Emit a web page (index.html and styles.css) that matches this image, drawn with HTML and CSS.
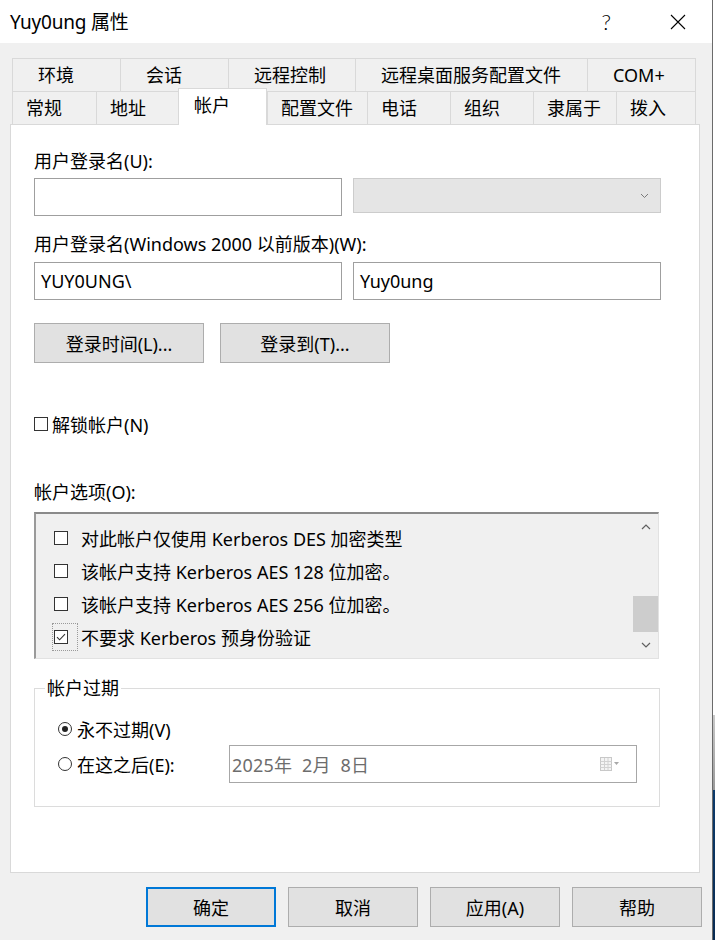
FILE: index.html
```html
<!DOCTYPE html>
<html lang="zh-CN">
<head>
<meta charset="utf-8">
<title>Yuy0ung 属性</title>
<link rel="stylesheet" href="styles.css">
</head>
<body>
<div class="screen">
  <div class="dialog">
    <div class="titlebar">
      <span class="title">Yuy0ung 属性</span>
      <span class="help">?</span>
      <svg class="close" width="16" height="16" viewBox="0 0 16 16"><path d="M1 1L15 15M15 1L1 15" stroke="#000" stroke-width="1.1" fill="none"/></svg>
    </div>

    <div class="tabs">
      <div class="tabrow row1">
        <div class="tab">环境</div>
        <div class="tab">会话</div>
        <div class="tab">远程控制</div>
        <div class="tab">远程桌面服务配置文件</div>
        <div class="tab">COM+</div>
      </div>
      <div class="tabrow row2">
        <div class="tab">常规</div>
        <div class="tab">地址</div>
        <div class="tab active">帐户</div>
        <div class="tab">配置文件</div>
        <div class="tab">电话</div>
        <div class="tab">组织</div>
        <div class="tab">隶属于</div>
        <div class="tab">拨入</div>
      </div>
    </div>

    <div class="panel">
      <div class="lbl first">用户登录名(U):</div>
      <div class="fieldrow">
        <div class="input"></div>
        <div class="combo">
          <svg width="9" height="6" viewBox="0 0 9 6"><path d="M1 1L4.5 4.5L8 1" stroke="#7a7a7a" stroke-width="1" fill="none"/></svg>
        </div>
      </div>
      <div class="lbl second">用户登录名(Windows 2000 以前版本)(W):</div>
      <div class="fieldrow tight">
        <div class="input">YUY0UNG\</div>
        <div class="input">Yuy0ung</div>
      </div>
      <div class="btnrow">
        <div class="btn wide">登录时间(L)...</div>
        <div class="btn wide">登录到(T)...</div>
      </div>
      <div class="unlock">
        <span class="cb"></span><span>解锁帐户(N)</span>
      </div>
      <div class="lbl opts">帐户选项(O):</div>
      <div class="listbox">
        <div class="items">
          <div class="item"><span class="cbw"><span class="cb"></span></span><span>对此帐户仅使用 Kerberos DES 加密类型</span></div>
          <div class="item"><span class="cbw"><span class="cb"></span></span><span>该帐户支持 Kerberos AES 128 位加密。</span></div>
          <div class="item"><span class="cbw"><span class="cb"></span></span><span>该帐户支持 Kerberos AES 256 位加密。</span></div>
          <div class="item"><span class="cbw focus"><span class="cb checked"><svg width="12" height="12" viewBox="0 0 12 12"><path d="M2 6.2L4.6 8.8L10 3.2" stroke="#333" stroke-width="1.1" fill="none"/></svg></span></span><span>不要求 Kerberos 预身份验证</span></div>
        </div>
        <div class="scroll">
          <div class="arrow"><svg width="10" height="6" viewBox="0 0 10 6"><path d="M1 5L5 1L9 5" stroke="#606060" stroke-width="1.2" fill="none"/></svg></div>
          <div class="track"><div class="thumb"></div></div>
          <div class="arrow"><svg width="10" height="6" viewBox="0 0 10 6"><path d="M1 1L5 5L9 1" stroke="#606060" stroke-width="1.2" fill="none"/></svg></div>
        </div>
      </div>
      <fieldset class="group">
        <legend>帐户过期</legend>
        <div class="radiorow"><span class="radio on"></span><span>永不过期(V)</span></div>
        <div class="radiorow second">
          <span class="radio"></span><span>在这之后(E):</span>
          <div class="date">
            <span class="datetext">2025年&nbsp; 2月&nbsp; 8日</span>
            <svg class="cal" width="22" height="14" viewBox="0 0 22 14"><rect x="0.5" y="0.5" width="11" height="13" fill="#f4f4f4" stroke="#c8c8c8"/><path d="M0.5 4.5H11.5M0.5 7.5H11.5M0.5 10.5H11.5M4.5 1V13M8 1V13" stroke="#d2d2d2" stroke-width="1"/><path d="M14 5H19L16.5 8Z" fill="#a8a8a8"/></svg>
          </div>
        </div>
      </fieldset>
    </div>

    <div class="footer">
      <div class="btn foot default">确定</div>
      <div class="btn foot">取消</div>
      <div class="btn foot">应用(A)</div>
      <div class="btn foot">帮助</div>
    </div>
  </div>
  <div class="outside"></div>
</div>
</body>
</html>
```

FILE: styles.css
```css
html, body {
  margin: 0;
  padding: 0;
}
body {
  width: 715px;
  height: 940px;
  overflow: hidden;
  background: #ffffff;
  font-family: "Noto Sans", "Noto Sans CJK SC", sans-serif;
  font-size: 18px;
  color: #000;
}
.screen {
  display: flex;
  height: 940px;
}
.dialog {
  width: 712px;
  height: 940px;
  background: #f0f0f0;
  border-right: 1px solid #6b6b6b;
  display: flex;
  flex-direction: column;
}
.outside {
  flex: 1;
  background: linear-gradient(to bottom, #ffffff 0, #ffffff 715px, #c9c9c9 715px, #9a9a9a 790px, #0c3a6b 790px, #082b52 940px);
}

/* title bar */
.titlebar {
  height: 43px;
  flex: none;
  background: #ffffff;
  display: flex;
  align-items: center;
  padding-left: 10px;
}
.title {
  font-size: 19px;
  line-height: 24px;
  letter-spacing: -0.2px;
}
.help {
  margin-left: auto;
  margin-right: 59px;
  font-family: "Lato", "DejaVu Sans", sans-serif;
  font-weight: 300;
  font-size: 22px;
  line-height: 22px;
}
.close {
  margin-right: 26px;
}

/* tabs */
.tabs {
  margin-top: 15px;
  padding-left: 12px;
  flex: none;
}
.tabrow {
  display: grid;
  height: 33px;
}
.row1 {
  grid-template-columns: 108px 108px 127px 232px 109px;
}
.row2 {
  grid-template-columns: 84px 82px 89px 100px 83px 83px 83px 80px;
}
.tab {
  box-sizing: border-box;
  border-top: 1px solid #d9d9d9;
  border-left: 1px solid #d9d9d9;
  display: flex;
  align-items: center;
  font-size: 18px;
  line-height: 22px;
  white-space: nowrap;
}
.row1 .tab {
  padding-left: 25px;
}
.row2 .tab {
  padding-left: 13px;
}
.tab:last-child {
  border-right: 1px solid #d9d9d9;
}
.tab.active {
  background: #ffffff;
  margin-top: -3px;
  margin-bottom: -1px;
  position: relative;
  z-index: 1;
  border-right: 1px solid #d9d9d9;
  padding-left: 15px;
  padding-bottom: 4px;
}

/* panel */
.panel {
  flex: none;
  margin-left: 10px;
  width: 690px;
  height: 749px;
  box-sizing: border-box;
  border: 1px solid #d9d9d9;
  background: #ffffff;
  padding-left: 23px;
  display: flex;
  flex-direction: column;
}
.lbl {
  height: 22px;
  line-height: 22px;
  white-space: nowrap;
}
.lbl.first {
  margin-top: 25px;
}
.lbl.second {
  margin-top: 17px;
}
.lbl.opts {
  margin-top: 46px;
}
.fieldrow {
  display: flex;
  gap: 11px;
  margin-top: 6px;
  align-items: flex-start;
}
.fieldrow.tight {
  margin-top: 7px;
}
.input {
  width: 308px;
  height: 38px;
  box-sizing: border-box;
  border: 1px solid #9f9f9f;
  background: #ffffff;
  padding-left: 6px;
  line-height: 36px;
}
.combo {
  width: 308px;
  height: 35px;
  box-sizing: border-box;
  border: 1px solid #cccccc;
  background: #e5e5e5;
  display: flex;
  align-items: center;
  justify-content: flex-end;
  padding-right: 11px;
}
.btnrow {
  display: flex;
  gap: 16px;
  margin-top: 23px;
}
.btn {
  box-sizing: border-box;
  height: 40px;
  border: 1px solid #adadad;
  background: #e1e1e1;
  display: flex;
  align-items: center;
  justify-content: center;
  white-space: nowrap;
}
.btn.wide {
  width: 170px;
}
.unlock {
  margin-top: 50px;
  height: 22px;
  display: flex;
  align-items: center;
  gap: 4px;
}
.cb {
  width: 14px;
  height: 14px;
  box-sizing: border-box;
  border: 1px solid #333333;
  background: #ffffff;
  display: inline-flex;
  align-items: center;
  justify-content: center;
  flex: none;
}

/* list box */
.listbox {
  margin-top: 9px;
  width: 625px;
  height: 147px;
  box-sizing: border-box;
  border-top: 2px solid #8a8a8a;
  border-left: 2px solid #9a9a9a;
  border-right: 1px solid #e2e2e2;
  border-bottom: 1px solid #e2e2e2;
  background: #f0f0f0;
  display: flex;
}
.items {
  flex: 1;
  padding-top: 7px;
  padding-left: 16px;
}
.item {
  height: 33px;
  display: flex;
  align-items: center;
  white-space: nowrap;
}
.cbw {
  width: 26px;
  height: 28px;
  box-sizing: border-box;
  border: 1px dotted transparent;
  display: flex;
  align-items: center;
  padding-left: 1px;
  margin-right: 3px;
}
.cbw.focus {
  border-color: #9a9a9a;
}
.scroll {
  width: 25px;
  display: flex;
  flex-direction: column;
}
.arrow {
  height: 26px;
  display: flex;
  align-items: center;
  justify-content: center;
  flex: none;
}
.track {
  flex: 1;
  display: flex;
  flex-direction: column;
  justify-content: flex-end;
}
.thumb {
  height: 36px;
  background: #cdcdcd;
}

/* group box */
.group {
  margin: 18px 0 0 0;
  width: 626px;
  box-sizing: border-box;
  border: 1px solid #dcdcdc;
  padding: 0 22px 23px 23px;
  min-width: 0;
}
.group legend {
  margin-left: -13px;
  padding: 0 2px;
  line-height: 22px;
}
.radiorow {
  display: flex;
  align-items: center;
  height: 22px;
  margin-top: 19px;
}
.radiorow.second {
  height: 38px;
  margin-top: 5px;
}
.radio {
  width: 14px;
  height: 14px;
  box-sizing: border-box;
  border: 1px solid #333333;
  border-radius: 50%;
  margin-right: 5px;
  flex: none;
  display: flex;
  align-items: center;
  justify-content: center;
}
.radio.on::after {
  content: "";
  width: 6px;
  height: 6px;
  border-radius: 50%;
  background: #222222;
}
.date {
  margin-left: auto;
  width: 408px;
  height: 38px;
  box-sizing: border-box;
  border: 1px solid #a7a7a7;
  background: #ffffff;
  display: flex;
  align-items: center;
  padding-left: 2px;
  padding-right: 14px;
  color: #6d6d6d;
}
.datetext {
  white-space: pre;
  letter-spacing: 0.2px;
}
.cal {
  margin-left: auto;
}

/* footer */
.footer {
  display: flex;
  justify-content: flex-end;
  gap: 12px;
  padding-right: 10px;
  margin-top: 14px;
}
.btn.foot {
  width: 130px;
}
.btn.default {
  border: 1px solid #0078d7;
  box-shadow: inset 0 0 0 1px #0078d7;
}
```
